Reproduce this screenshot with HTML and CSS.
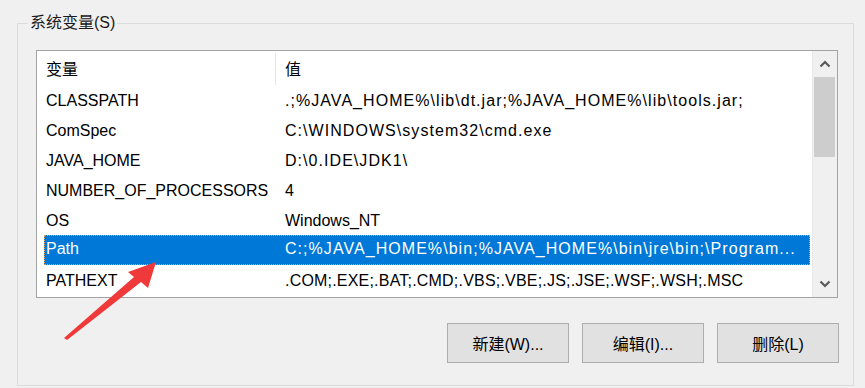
FILE: index.html
```html
<!DOCTYPE html>
<html lang="zh-CN">
<head>
    <meta charset="UTF-8">
    <title>系统变量</title>
    <link rel="stylesheet" href="styles.css">
</head>
<body>
    <fieldset class="group">
        <legend>系统变量(S)</legend>
        <div class="list">
            <div class="list-body">
                <div class="head">
                    <span class="c1">变量</span>
                    <span class="c2">值</span>
                </div>
                <div class="row"><span>CLASSPATH</span><span class="val">.;%JAVA_HOME%\lib\dt.jar;%JAVA_HOME%\lib\tools.jar;</span></div>
                <div class="row"><span>ComSpec</span><span class="val">C:\WINDOWS\system32\cmd.exe</span></div>
                <div class="row"><span>JAVA_HOME</span><span class="val">D:\0.IDE\JDK1\</span></div>
                <div class="row"><span>NUMBER_OF_PROCESSORS</span><span class="val plain">4</span></div>
                <div class="row"><span>OS</span><span class="val plain">Windows_NT</span></div>
                <div class="row selected"><span>Path</span><span class="val">C:;%JAVA_HOME%\bin;%JAVA_HOME%\bin\jre\bin;\Program...</span></div>
                <div class="row"><span>PATHEXT</span><span class="val tight">.COM;.EXE;.BAT;.CMD;.VBS;.VBE;.JS;.JSE;.WSF;.WSH;.MSC</span></div>
            </div>
            <div class="scrollbar">
                <div class="sb-btn">
                    <svg width="12" height="8" viewBox="0 0 12 8"><polyline points="1.5,6.5 6,2 10.5,6.5" fill="none" stroke="#5a5a5a" stroke-width="2.2"/></svg>
                </div>
                <div class="sb-track"><div class="sb-thumb"></div></div>
                <div class="sb-btn">
                    <svg width="12" height="8" viewBox="0 0 12 8"><polyline points="1.5,1.5 6,6 10.5,1.5" fill="none" stroke="#5a5a5a" stroke-width="2.2"/></svg>
                </div>
            </div>
        </div>
        <div class="actions">
            <button>新建(W)...</button>
            <button>编辑(I)...</button>
            <button>删除(L)</button>
        </div>
    </fieldset>
    <svg class="arrow" width="865" height="388" viewBox="0 0 865 388">
        <polygon points="64,338 134,277 128,272 156,262 148,288 141,282 67,340" fill="#f0393a"/>
    </svg>
</body>
</html>
```

FILE: styles.css
```css
body {
    margin: 0;
    padding: 12px 0 0 17px;
    height: 388px;
    box-sizing: border-box;
    overflow: hidden;
    background-color: #f0f0f0;
    color: #000;
    font-family: "Liberation Sans", "Noto Sans CJK SC", sans-serif;
    font-size: 16px;
    position: relative;
}
.group {
    margin: 0;
    width: 837px;
    box-sizing: border-box;
    border: 1px solid #dcdcdc;
    padding: 16px 14px 22px 18px;
    min-width: 0;
}
.group legend {
    margin-left: -8px;
    padding: 0 2px;
    line-height: 22px;
    color: #1a1a1a;
}
.list {
    display: flex;
    width: 802px;
    height: 248px;
    box-sizing: border-box;
    border: 1px solid #a3a3a3;
    background-color: #fff;
}
.list-body {
    flex: 1;
    overflow: hidden;
}
.head {
    display: grid;
    grid-template-columns: 231px 1fr;
    height: 34px;
    margin-left: 7px;
    line-height: 30px;
}
.head span {
    padding-top: 4px;
}
.head .c1 {
    padding-left: 2px;
}
.head .c2 {
    margin-top: 2px;
    padding-top: 2px;
    padding-left: 9px;
    border-left: 1px solid #e5e5e5;
}
.row {
    display: grid;
    grid-template-columns: 239px 1fr;
    height: 30px;
    line-height: 31px;
    margin: 0 2px 0 7px;
    box-sizing: border-box;
    white-space: nowrap;
}
.row span {
    padding-left: 2px;
    overflow: hidden;
}
.row .val {
    letter-spacing: 1.05px;
}
.row .val.tight {
    letter-spacing: 0.2px;
}
.row .val.plain {
    letter-spacing: 0;
}
.row.selected {
    background-color: #0078d7;
    color: #fff;
    line-height: 28px;
    outline: 1px dotted #e8a050;
    outline-offset: -1px;
}
.scrollbar {
    width: 25px;
    display: flex;
    flex-direction: column;
    background-color: #f0f0f0;
    border-left: 1px solid #e8e8e8;
    box-sizing: border-box;
}
.sb-btn {
    height: 26px;
    display: flex;
    justify-content: center;
    align-items: center;
}
.sb-track {
    flex: 1;
}
.sb-thumb {
    height: 80px;
    margin: 0 2px 0 1px;
    background-color: #cdcdcd;
}
.actions {
    display: flex;
    justify-content: flex-end;
    gap: 13px;
    margin-top: 25px;
}
.actions button {
    width: 122px;
    height: 40px;
    background-color: #e1e1e1;
    border: 1px solid #adadad;
    font-family: "Liberation Sans", "Noto Sans CJK SC", sans-serif;
    font-size: 16px;
    color: #000;
    padding: 0;
}
.arrow {
    position: absolute;
    top: 0;
    left: 0;
    pointer-events: none;
}
```
